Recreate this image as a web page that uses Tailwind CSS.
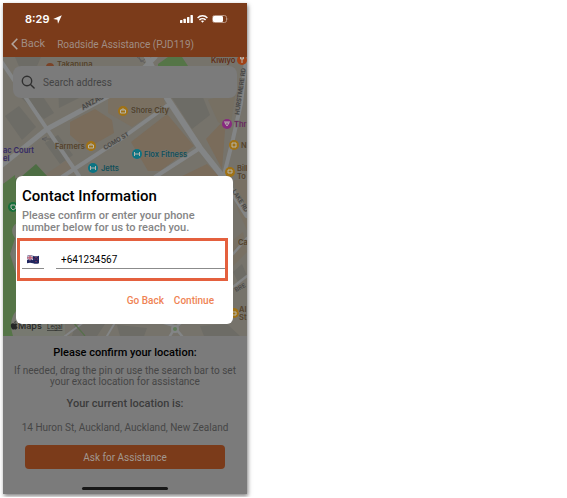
<!DOCTYPE html>
<html lang="en">
<head>
<meta charset="utf-8">
<meta name="viewport" content="width=device-width, initial-scale=1">
<title>Roadside Assistance</title>
<script src="https://cdn.jsdelivr.net/npm/@tailwindcss/browser@4"></script>
</head>
<body class="bg-white p-[3px] font-[Roboto,sans-serif]">
<main class="relative flex w-full max-w-[244px] flex-col bg-[#7b7b7b] shadow-[1px_2px_4px_rgba(0,0,0,0.5)]">
  <header class="bg-[#7b3b1a]">
    <div class="flex h-8 items-center justify-between pr-[18px] pl-[22px] text-white">
      <div class="flex items-center gap-1 font-[Inter,sans-serif] text-[11px] font-semibold">
        <span>8:29</span>
        <svg class="size-[9px]" viewBox="0 0 9 9" fill="currentColor" aria-hidden="true"><path d="M8.8.2 5 8.8 4.4 4.7.2 4Z"/></svg>
      </div>
      <div class="flex items-center gap-1">
        <svg class="h-2 w-[13px]" viewBox="0 0 13 8" fill="currentColor" aria-hidden="true"><rect y="5" width="2.4" height="3" rx=".6"/><rect x="3.5" y="3.7" width="2.4" height="4.3" rx=".6"/><rect x="7" y="2" width="2.4" height="6" rx=".6"/><rect x="10.5" width="2.4" height="8" rx=".6"/></svg>
        <svg class="h-2 w-[11px]" viewBox="0 0 11 8" fill="none" stroke="currentColor" stroke-width="1.5" aria-hidden="true"><path d="M.6 2.9C3.3.1 7.7.1 10.4 2.9"/><path d="M2.4 4.9c1.700-1.700 4.500-1.700 6.200 0"/><path d="M3.900 6 5.500 7.800 7.100 6Q5.500 4.900 3.900 6Z" fill="currentColor" stroke="none"/></svg>
        <svg class="h-2 w-[17px]" viewBox="0 0 17 8" aria-hidden="true"><rect x=".5" y=".5" width="14" height="7" rx="2" fill="none" stroke="#b99582"/><rect x="1" y="1" width="10" height="6" rx="1.200" fill="#fff"/><path d="M15.700 2.700q1.200 1.300 0 2.600Z" fill="#b99582"/></svg>
      </div>
    </div>
    <nav class="flex h-[22px] items-center gap-3 pb-1 pl-2 text-[#a08d83]">
      <a href="#" class="flex items-center gap-[3px] text-[11px]">
        <svg class="h-3 w-[7px]" viewBox="0 0 7 12" fill="none" stroke="#b1a49c" stroke-width="1.600" aria-hidden="true"><path d="M6.300.8 1.200 6l5.100 5.200"/></svg>
        Back
      </a>
      <h1 class="text-[10px] whitespace-nowrap">Roadside Assistance (PJD119)</h1>
    </nav>
  </header>

  <section class="relative h-[279px] overflow-hidden" aria-label="Map">
    <svg class="block h-full w-full" viewBox="3 57 244 279" preserveAspectRatio="xMidYMid slice" font-family="Inter, sans-serif" font-weight="600" font-size="7.500">
      <rect x="3" y="57" width="244" height="279" fill="#76736b"/>
      <g fill="#7a6c5b">
        <path d="m70 122 25-13 17 11 2 13-28 16-16-14Z"/>
        <path d="m108 95 54-5 3 15-33 22-24-14Z" fill="#7a7061"/>
        <path d="m131 142 36-28 27 32-34 25h-12Z"/>
        <path d="m206 139 20-21-4 51Z"/>
        <path d="m208 100 28-10-6 40-12-8Z" fill="#777063"/>
        <path d="m207 164 13 13h-40Z"/>
        <path d="m40 178 30-20 6 14Z" fill="#797064"/>
        <path d="M234 180h13v50l-10-22ZM233 240l10-8 4 20-14 14Z" fill="#787063"/>
      </g>
      <g fill="#6d6c66">
        <path d="m17 94 20-6 17 25-10 6Z"/><path d="m58 84 25-5 14 10-38 19Z"/>
        <path d="m5 116 14-10 17 21-14 13Z"/><path d="m45 143 13-8 15 20-13 9Z"/>
        <path d="m172 98 30-3 8 20-18 14Z"/><path d="m15 57h26l-7 16-13-2Z"/>
        <path d="m233 272 9-8 5 12-8 8Z"/><path d="m75 325 30-1-8 12H72Z"/>
        <path d="m117 325 30 3-3 8h-24ZM200 326l27-2 13 12h-36Z"/>
      </g>
      <g fill="#557547">
        <path d="m158 64 10-7h14l6 9h-30Z"/>
        <path d="m22 176 14-12 12 13-28 26-4 28-7 25 8 80H3V184Z" fill="#4d6d43"/>
        <path d="m3 184 12-9 3 54-8 25 9 30-5 52H3Z"/>
      </g>
      <path d="M17 223c-7 4-6 12 0 17m0 6c-7 5-6 17 0 18m0 46c-5 5-8 14-4 26h52v-14H17" fill="#777970"/>
      <g fill="none" stroke="#838586" stroke-linecap="round" stroke-linejoin="round">
        <path d="m1 166 46-37 78-42 30-30" stroke-width="5"/>
        <path d="m1 61 46 68 32 47" stroke-width="4"/>
        <path d="m62 177 63-41 43-31M155 177l45-29" stroke-width="4"/>
        <path d="m147 57 20 41 33 50 23 29 24 38" stroke-width="6"/>
        <path d="m246 60-5 43-8 36-9 36" stroke-width="4"/>
        <path d="m233 254 14-16M233 287l14-11M170 336l5-8 7-6M174 326l-13-4M182 336l-6-7" stroke-width="2.500"/>
        <path d="M65 336 84 322M107 336l9-15" stroke-width="2"/>
      </g>
      <path d="m73 322 12 14" stroke="#56704b" stroke-width="1.200"/>
      <circle cx="175" cy="329" r="4" fill="#838586"/><circle cx="175" cy="329" r="2" fill="#5f7b59"/>
      <g fill="none" stroke="#5a5b5d" stroke-width=".8"><path d="m42 139 5-2m-5 2 4 2m-4-2h9M137 57l8 6m-6-6 2 5 4-3"/></g>

      <g fill="#a07215">
        <circle cx="123" cy="111" r="5"/><circle cx="91" cy="146" r="5"/><circle cx="234" cy="145" r="5"/><circle cx="230" cy="172" r="5"/><circle cx="234" cy="313" r="5"/>
        <circle cx="50" cy="67" r="4" fill="#7a4327"/>
        <circle cx="242" cy="60" r="5" fill="#a14216"/>
        <circle cx="227" cy="124" r="5" fill="#872a7f"/>
        <circle cx="137" cy="154" r="5" fill="#0d7483"/><circle cx="93" cy="168" r="5" fill="#0d7483"/>
        <circle cx="13" cy="207" r="5" fill="#17703a"/>
      </g>
      <g fill="none" stroke="#b5b5ad" stroke-width="1">
        <path d="M120.500 110h5v3h-5Zm1 0q1.500-3 3 0M88.500 145h5v3h-5Zm1 0q1.500-3 3 0M232 143h4v4h-4ZM228 170h4v3h-4ZM232 312h4v3h-4Z"/>
        <path d="M134.500 152v4m5-4v4m-5-2h5M90.500 166v4m5-4v4m-5-2h5M242 57v6m-1.500-6v2h3v-2M225 123l2 3 2-3Zm-1-1h6M11 205h4l1 3-3 2-2-2Z"/>
      </g>

      <g stroke="#77746c" stroke-width="1.200" paint-order="stroke" stroke-linejoin="round">
        <g fill="#54422a">
          <text x="57" y="67">Takapuna</text>
          <text x="131" y="113">Shore City</text>
          <text x="55" y="149">Farmers</text>
          <text x="241" y="148">N</text>
          <text x="237" y="171">Bill</text><text x="237" y="179">To</text>
          <text x="238" y="245">Ca</text>
          <text x="239" y="312">Al</text><text x="239" y="320">St</text>
        </g>
        <text x="211" y="63" fill="#612c14">Kiwiyo</text>
        <text x="234" y="127" fill="#67275f">Thr</text>
        <text x="144" y="157" fill="#124f5a">Flox Fitness</text>
        <text x="101" y="171" fill="#124f5a">Jetts</text>
        <text x="3" y="153" fill="#352a65">ac Court</text><text x="3" y="161" fill="#352a65">el</text>
        <g fill="#3e3f42" font-size="7" font-weight="500">
          <text transform="translate(83 110) rotate(-29)">ANZAC</text>
          <text transform="translate(105 150) rotate(-31)" font-size="6">COMO ST</text>
          <text transform="translate(239 115) rotate(-82)" font-size="6">HURSTMERE RD</text>
          <text transform="translate(232 191) rotate(58)" font-size="6">LAKE RD</text>
          <text transform="translate(236 292) rotate(-28)" font-size="6">BRE</text>
        </g>
      </g>
      <g fill="#252726">
        <path d="M13.600 323.600c-1-.7-2.800 0-2.800 2s1.300 4 2.300 4c.6 0 .7-.3 1.300-.3s.7.300 1.200.3c.9 0 1.700-1.600 1.900-2.300-1.300-.7-1.300-2.300-.1-3-.7-1.100-2-1-2.900-.6-.3.100-.6 0-.900-.1Z"/><path d="M14.200 323.100q0-1.700 1.700-2.100 0 1.800-1.700 2.100"/>
        <text x="18" y="329" font-size="9" font-weight="500">Maps</text>
        <text x="47" y="329" font-size="6" font-weight="400" text-decoration="underline">Legal</text>
      </g>
    </svg>
    <label class="absolute inset-x-[10px] top-[9px] flex h-8 items-center gap-2 rounded-lg bg-[#7b7b7b] pl-2">
      <svg class="size-[14px] shrink-0" viewBox="0 0 14 14" fill="none" stroke="#303030" stroke-width="1.400" stroke-linecap="round" aria-hidden="true"><circle cx="6" cy="6" r="4.700"/><path d="m9.500 9.500 3.600 3.600"/></svg>
      <span class="sr-only">Search address</span>
      <input type="search" placeholder="Search address" class="w-full min-w-0 bg-transparent text-[10px] text-[#3d3d3d] outline-none placeholder:text-[#444444]">
    </label>
  </section>

  <section class="flex flex-col items-center px-2 pt-[10px] pb-1 text-center text-[10px] text-[#464646]">
    <h2 class="text-[11px] leading-[14px] font-medium text-black">Please confirm your location:</h2>
    <p class="mt-[5px] leading-[11px]">If needed, drag the pin or use the search bar to set your exact location for assistance</p>
    <h3 class="mt-[10px] text-[11px] leading-[14px] font-medium text-[#3b3b3b]">Your current location is:</h3>
    <p class="mt-[10px] leading-[14px] whitespace-nowrap">14 Huron St, Auckland, Auckland, New Zealand</p>
    <div class="w-full px-[14px] pt-[10px]">
      <button type="button" class="h-6 w-full rounded-[4px] bg-[#7b3b1a] text-[10px] text-[#a29890]">Ask for Assistance</button>
    </div>
    <div class="mt-[18px] h-[3px] w-[86px] rounded-full bg-[#171717]"></div>
  </section>

  <div role="dialog" aria-labelledby="contact-title" class="absolute top-[173px] right-[14px] left-[13px] flex flex-col rounded-md bg-white pt-3 pb-4">
    <h2 id="contact-title" class="px-[6px] text-[15px] leading-4 font-medium text-black">Contact Information</h2>
    <p class="mt-[6px] px-[6px] text-[11px] leading-3 font-medium text-[#858585]">Please confirm or enter your phone number below for us to reach you.</p>
    <div class="mt-1 mr-[5px] ml-px flex h-[43px] gap-3 border-[3px] border-[#e4603e] pt-2 pl-[2px]">
      <button type="button" aria-label="Country: New Zealand" class="flex h-5 w-[22px] items-center justify-center border-b border-[#8b8b8b] pt-px">
        <svg class="h-[9px] w-3" viewBox="0 0 12 9" aria-hidden="true"><path d="M0 .8Q3-.2 6 .8t6 0v7.400q-3 1-6 0t-6 0Z" fill="#20265f"/><path d="m0 .8 6 4M6 .8l-6 4" stroke="#d5cedb" stroke-width="1.100"/><path d="M3 .3v5M0 2.900h6" stroke="#ddd5df" stroke-width="1.500"/><path d="M3 .3v5M0 2.900h6" stroke="#bd304b" stroke-width=".8"/><g fill="#c43b58"><circle cx="9" cy="2.300" r=".6"/><circle cx="7.900" cy="4" r=".5"/><circle cx="10.300" cy="3.900" r=".5"/><circle cx="9" cy="6.600" r=".6"/></g></svg>
      </button>
      <input type="tel" aria-label="Phone number" value="+641234567" class="h-5 min-w-0 flex-1 border-b border-[#8b8b8b] bg-transparent pt-[2px] pl-[5px] text-[10px] text-black outline-none">
    </div>
    <div class="mt-[13px] flex justify-end gap-[10px] pr-[19px] text-[10px] leading-[14px] font-medium text-[#ef8354]">
      <button type="button">Go Back</button>
      <button type="button">Continue</button>
    </div>
  </div>
</main>
</body>
</html>
